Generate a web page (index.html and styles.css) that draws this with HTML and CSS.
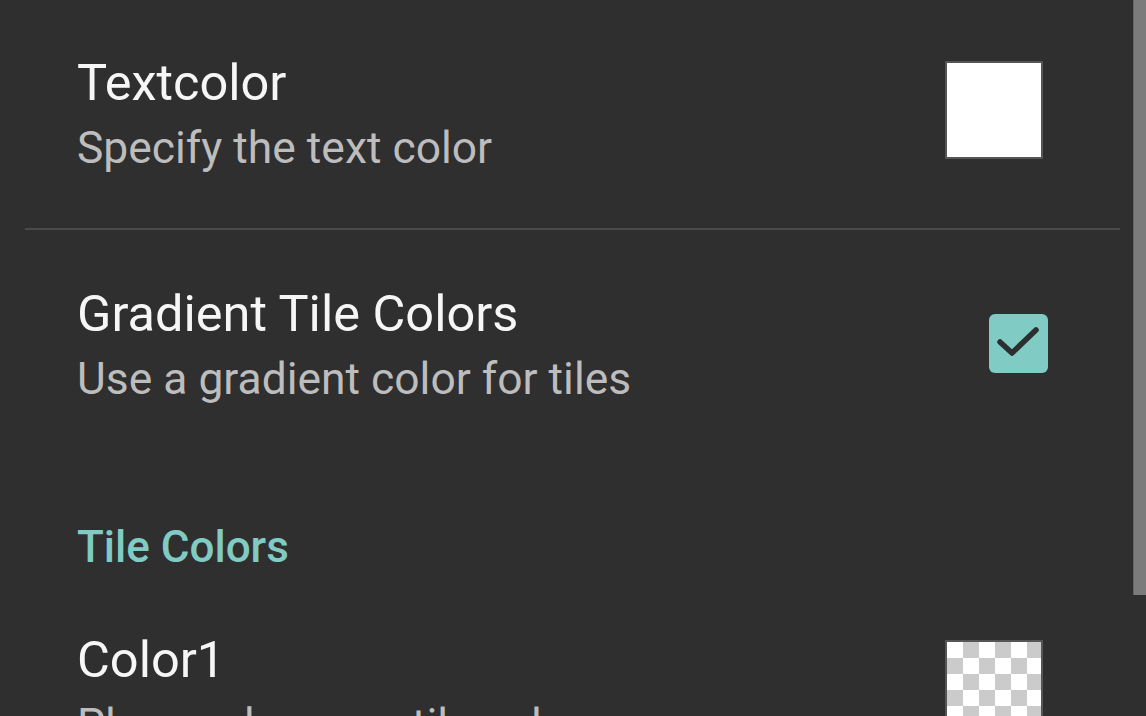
FILE: index.html
```html
<!DOCTYPE html>
<html lang="en">
<head>
    <meta charset="UTF-8">
    <meta name="viewport" content="width=device-width, initial-scale=1.0">
    <title>Settings</title>
    <link rel="stylesheet" href="styles.css">
</head>
<body>
    <div class="screen">
        <div class="pref-list">
            <div class="pref-row">
                <div class="pref-text">
                    <div class="pref-title">Textcolor</div>
                    <div class="pref-summary">Specify the text color</div>
                </div>
                <div class="swatch swatch-white"></div>
            </div>

            <div class="divider"></div>

            <div class="pref-row pref-row-check">
                <div class="pref-text">
                    <div class="pref-title">Gradient Tile Colors</div>
                    <div class="pref-summary">Use a gradient color for tiles</div>
                </div>
                <div class="checkbox">
                    <svg width="59" height="59" viewBox="0 0 59 59">
                        <polyline points="11,28 23,39 47,16" fill="none" stroke="#2b2f30" stroke-width="5.5" stroke-linecap="round" stroke-linejoin="round"/>
                    </svg>
                </div>
            </div>

            <div class="category">Tile Colors</div>

            <div class="pref-row">
                <div class="pref-text">
                    <div class="pref-title">Color1</div>
                    <div class="pref-summary">Please choose a tile color</div>
                </div>
                <div class="swatch swatch-clear"></div>
            </div>
        </div>

        <div class="scrollbar">
            <div class="scroll-thumb"></div>
        </div>
    </div>
</body>
</html>
```

FILE: styles.css
```css
:root {
    --background-color: #2f2f2f;
    --title-color: #f6f6f6;
    --summary-color: #bdbdbd;
    --accent-color: #80cbc4;
    --divider-color: #4a4a4a;
    --thumb-color: #7b7b7b;
}

* {
    margin: 0;
    padding: 0;
    box-sizing: border-box;
    font-family: Roboto, 'Noto Sans', sans-serif;
}

body {
    background-color: var(--background-color);
    height: 100vh;
    overflow: hidden;
}

.screen {
    display: flex;
    height: 100%;
}

.pref-list {
    flex: 1;
    display: flex;
    flex-direction: column;
}

.pref-list > * {
    flex-shrink: 0;
}

.pref-row {
    display: flex;
    align-items: flex-start;
    justify-content: space-between;
    padding: 53px 90px 52px 77px;
}

.pref-row-check {
    padding-top: 54px;
    padding-bottom: 58px;
}

.pref-text {
    display: flex;
    flex-direction: column;
}

.pref-title {
    font-size: 50.5px;
    line-height: 60px;
    color: var(--title-color);
}

.pref-summary {
    margin-top: 7px;
    font-size: 44.4px;
    line-height: 56px;
    color: var(--summary-color);
    white-space: nowrap;
}

.swatch {
    width: 98px;
    height: 98px;
    margin-top: 8px;
    border: 2px solid #555;
}

.swatch-white {
    background-color: #fff;
}

.swatch-clear {
    margin-top: 10px;
    background: repeating-conic-gradient(#cbcbcb 0 25%, #fff 0 50%) 0 0 / 32px 32px;
}

.checkbox {
    width: 59px;
    height: 59px;
    margin-top: 30px;
    margin-right: -5px;
    border-radius: 6px;
    background-color: var(--accent-color);
}

.checkbox svg {
    display: block;
}

.divider {
    height: 2px;
    margin: 0 13px 0 25px;
    background-color: var(--divider-color);
}

.category {
    padding: 54px 0 2px 77px;
    font-size: 44px;
    line-height: 56px;
    font-weight: 500;
    color: var(--accent-color);
}

.scrollbar {
    width: 13px;
}

.scroll-thumb {
    height: 595px;
    background-color: var(--thumb-color);
    border-left: 1px solid #666;
}
```
